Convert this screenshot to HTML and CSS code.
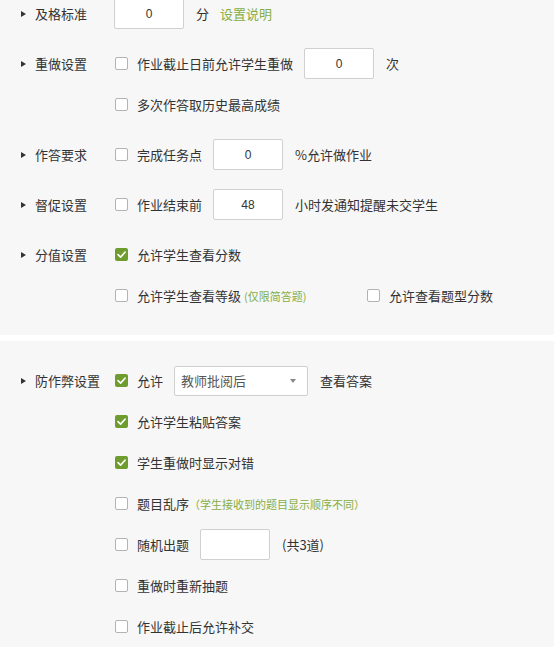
FILE: index.html
```html
<!DOCTYPE html>
<html lang="zh-CN">
<head>
<meta charset="utf-8">
<title>作业设置</title>
<link rel="stylesheet" href="styles.css">
</head>
<body>
<div class="panel panel-first">
  <div class="group">
    <div class="head"><span class="caret"></span><span class="title">及格标准</span></div>
    <div class="opts">
      <div class="line"><input class="field field-lead" type="text" value="0"><span class="txt">分</span><a class="link">设置说明</a></div>
    </div>
  </div>
  <div class="group">
    <div class="head"><span class="caret"></span><span class="title">重做设置</span></div>
    <div class="opts">
      <div class="line"><span class="box"></span><span class="txt">作业截止日前允许学生重做</span><input class="field" type="text" value="0"><span class="txt">次</span></div>
      <div class="line"><span class="box"></span><span class="txt">多次作答取历史最高成绩</span></div>
    </div>
  </div>
  <div class="group">
    <div class="head"><span class="caret"></span><span class="title">作答要求</span></div>
    <div class="opts">
      <div class="line"><span class="box"></span><span class="txt">完成任务点</span><input class="field" type="text" value="0"><span class="txt">%允许做作业</span></div>
    </div>
  </div>
  <div class="group">
    <div class="head"><span class="caret"></span><span class="title">督促设置</span></div>
    <div class="opts">
      <div class="line"><span class="box"></span><span class="txt">作业结束前</span><input class="field" type="text" value="48"><span class="txt">小时发通知提醒未交学生</span></div>
    </div>
  </div>
  <div class="group">
    <div class="head"><span class="caret"></span><span class="title">分值设置</span></div>
    <div class="opts">
      <div class="line"><span class="box box-on"><svg viewBox="0 0 13 13" width="13" height="13"><path d="M3 6.6 L5.6 9.1 L10.2 4" fill="none" stroke="#fff" stroke-width="1.6" stroke-linecap="round" stroke-linejoin="round"/></svg></span><span class="txt">允许学生查看分数</span></div>
      <div class="line">
        <span class="item item-wide"><span class="box"></span><span class="txt">允许学生查看等级</span><span class="hint hint-paren">(仅限简答题)</span></span>
        <span class="item"><span class="box"></span><span class="txt">允许查看题型分数</span></span>
      </div>
    </div>
  </div>
</div>
<div class="panel">
  <div class="group">
    <div class="head"><span class="caret"></span><span class="title">防作弊设置</span></div>
    <div class="opts">
      <div class="line"><span class="box box-on"><svg viewBox="0 0 13 13" width="13" height="13"><path d="M3 6.6 L5.6 9.1 L10.2 4" fill="none" stroke="#fff" stroke-width="1.6" stroke-linecap="round" stroke-linejoin="round"/></svg></span><span class="txt">允许</span><span class="select"><span class="select-val">教师批阅后</span><span class="select-arrow"></span></span><span class="txt">查看答案</span></div>
      <div class="line"><span class="box box-on"><svg viewBox="0 0 13 13" width="13" height="13"><path d="M3 6.6 L5.6 9.1 L10.2 4" fill="none" stroke="#fff" stroke-width="1.6" stroke-linecap="round" stroke-linejoin="round"/></svg></span><span class="txt">允许学生粘贴答案</span></div>
      <div class="line"><span class="box box-on"><svg viewBox="0 0 13 13" width="13" height="13"><path d="M3 6.6 L5.6 9.1 L10.2 4" fill="none" stroke="#fff" stroke-width="1.6" stroke-linecap="round" stroke-linejoin="round"/></svg></span><span class="txt">学生重做时显示对错</span></div>
      <div class="line"><span class="box"></span><span class="txt">题目乱序</span><span class="hint">（学生接收到的题目显示顺序不同）</span></div>
      <div class="line"><span class="box"></span><span class="txt">随机出题</span><input class="field" type="text" value=""><span class="txt">(共3道)</span></div>
      <div class="line"><span class="box"></span><span class="txt">重做时重新抽题</span></div>
      <div class="line"><span class="box"></span><span class="txt">作业截止后允许补交</span></div>
    </div>
  </div>
</div>
</body>
</html>
```
FILE: styles.css
```css
html, body {
  margin: 0;
  padding: 0;
  background: #ffffff;
}
body {
  font-family: "Noto Sans CJK SC", "Noto Sans", "Liberation Sans", sans-serif;
  font-size: 13px;
  color: #333333;
  overflow: hidden;
}
.panel {
  background: #f7f7f7;
  padding: 24px 0 24px 0;
  margin-bottom: 6px;
}
.panel-first {
  padding-top: 0;
  margin-top: -2px;
}
.group {
  display: flex;
  padding-left: 21px;
}
.group + .group {
  margin-top: 19px;
}
.head {
  width: 93px;
  height: 31px;
  display: flex;
  align-items: center;
  flex-shrink: 0;
}
.caret {
  width: 0;
  height: 0;
  border-left: 5px solid #333333;
  border-top: 3px solid transparent;
  border-bottom: 3px solid transparent;
  margin-right: 9px;
}
.title {
  color: #333333;
  white-space: nowrap;
}
.opts {
  display: flex;
  flex-direction: column;
  gap: 10px;
}
.line {
  height: 31px;
  display: flex;
  align-items: center;
  white-space: nowrap;
}
.item {
  display: flex;
  align-items: center;
}
.item-wide {
  width: 252px;
}
.box {
  width: 13px;
  height: 13px;
  box-sizing: border-box;
  border: 1px solid #b3b3b3;
  border-radius: 2px;
  background: #ffffff;
  margin: 0 9px 0 1px;
  flex-shrink: 0;
  display: flex;
}
.box-on {
  border: none;
  background: #6f9c2f;
}
.box-on svg {
  display: block;
}
.txt {
  color: #333333;
}
.field {
  width: 70px;
  height: 31px;
  box-sizing: border-box;
  border: 1px solid #d0d0d0;
  border-radius: 2px;
  background: #ffffff;
  margin: 0 12px 0 11px;
  padding: 0;
  text-align: center;
  font-family: "Liberation Sans", "Noto Sans", sans-serif;
  font-size: 12px;
  color: #333333;
  outline: none;
}
.field-lead {
  margin-left: 0;
}
.link {
  color: #86ae45;
  margin-left: 11px;
  cursor: pointer;
}
.hint {
  color: #86ae45;
  font-size: 11px;
}
.hint-paren {
  margin-left: 3px;
}
.select {
  width: 134px;
  height: 30px;
  box-sizing: border-box;
  border: 1px solid #cfcfcf;
  border-radius: 2px;
  background: #ffffff;
  margin: 0 12px 0 11px;
  padding: 0 11px 0 6px;
  display: flex;
  align-items: center;
  justify-content: space-between;
}
.select-val {
  color: #555555;
}
.select-arrow {
  width: 0;
  height: 0;
  border-top: 4px solid #888888;
  border-left: 3px solid transparent;
  border-right: 3px solid transparent;
}
```
